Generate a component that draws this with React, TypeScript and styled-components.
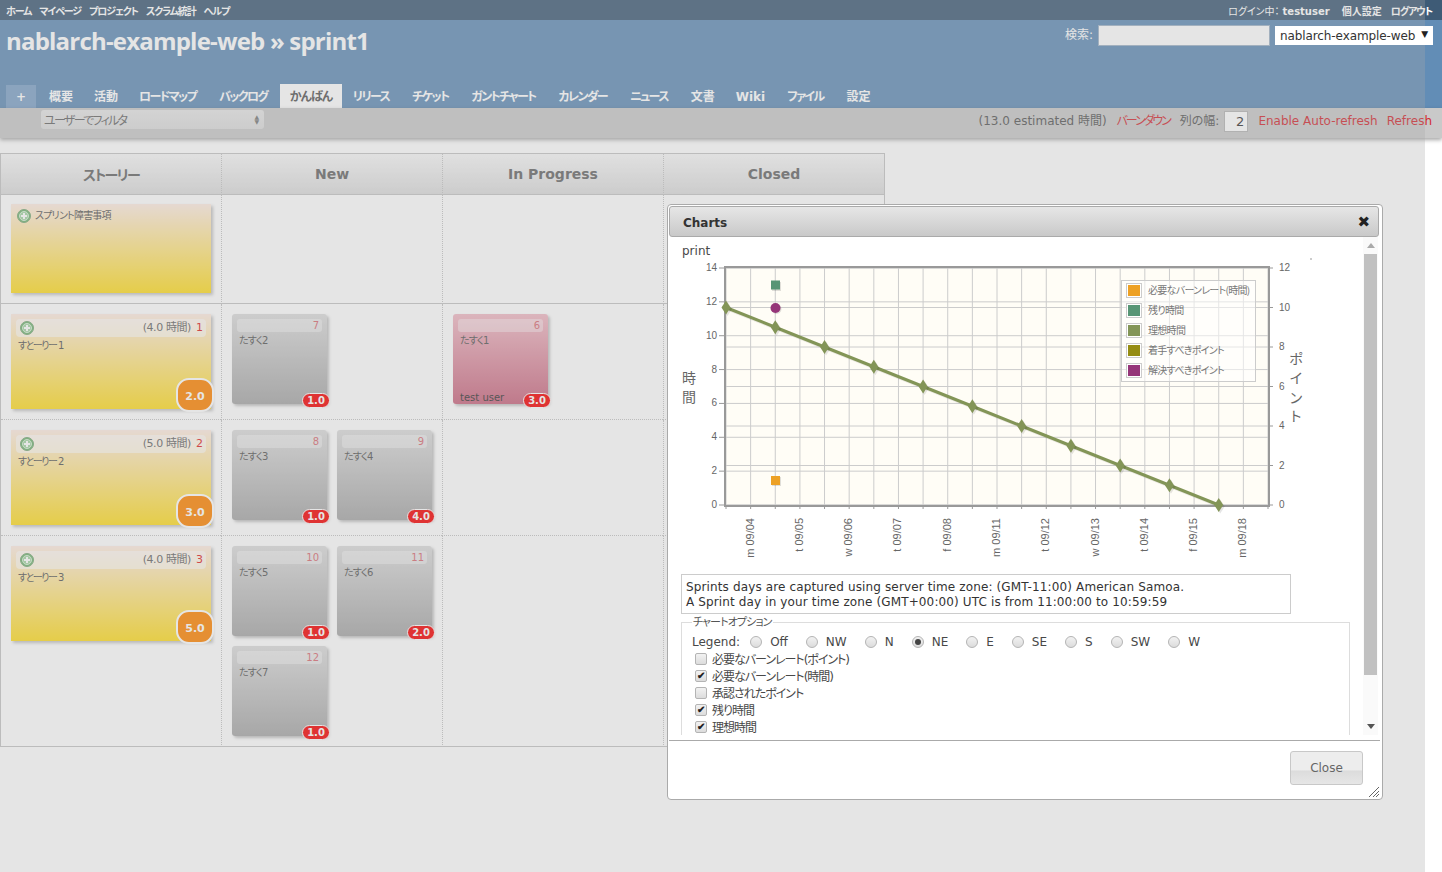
import * as React from 'react';
import styled, { createGlobalStyle } from 'styled-components';

const GlobalStyle = createGlobalStyle`
  html, body {
    margin: 0;
    padding: 0;
    height: 100%;
    overflow: hidden;
    background: #fff;
  }

  body {
    font-family: "DejaVu Sans", "Noto Sans CJK JP", sans-serif;
    font-size: 12px;
    color: #484848;
    font-feature-settings: "palt";
  }
`;

const Page = styled.div`
  width: 1442px;
  height: 872px;
  position: relative;
  overflow: hidden;
`;

const TopBar = styled.div`
  height: 20px;
  background: #3e5b76;
  display: flex;
  justify-content: space-between;
  align-items: center;
  padding: 0 10px 0 6px;
  font-size: 10px;
  font-weight: bold;
  color: #fff;
`;

const TopLinks = styled.div<{ $gap: number }>`
  display: flex;
  gap: ${(props) => props.$gap}px;
  letter-spacing: -1.1px;
`;

const LoginName = styled.span`
  font-weight: normal;
  letter-spacing: 0;
  margin-right: 3px;
`;

const UserName = styled.span`
  letter-spacing: 0;
  margin-right: 3px;
`;

const SettingsLink = styled.span`
  letter-spacing: 0;
`;

const Header = styled.div`
  height: 88px;
  background: #628db6;
  display: flex;
  flex-direction: column;
  justify-content: space-between;
`;

const HeaderTop = styled.div`
  display: flex;
  justify-content: space-between;
  padding: 5px 9px 0 6px;
`;

const Title = styled.h1`
  margin: 0;
  font-family: "Open Sans", "Noto Sans CJK JP", sans-serif;
  font-size: 24px;
  line-height: 32px;
  font-weight: 700;
  letter-spacing: -0.8px;
  color: #fff;
`;

const Search = styled.div`
  display: flex;
  align-items: flex-start;
  color: #fff;
  font-size: 12px;
`;

const SearchLabel = styled.label`
  line-height: 20px;
  margin-right: 5px;
`;

const SearchInput = styled.input`
  width: 172px;
  height: 21px;
  box-sizing: border-box;
  border: 1px solid #9fb4c8;
  background: #fff;
  margin: 0 5px 0 0;
`;

const ProjectJump = styled.div`
  width: 158px;
  height: 19px;
  margin-top: 1px;
  box-sizing: border-box;
  background: #fff;
  display: flex;
  justify-content: space-between;
  padding: 0 5px;
  color: #333;
  line-height: 20px;
  letter-spacing: -0.1px;
  position: relative;
  z-index: 101;
`;

const ProjectArrow = styled.span`
  font-size: 9px;
  line-height: 16px;
  color: #222;
`;

const Tabs = styled.ul`
  list-style: none;
  margin: 0;
  padding: 0 0 0 6px;
  display: flex;
  align-items: flex-end;
  height: 24px;
`;

const Tab = styled.li<{ $kana?: boolean }>`
  height: 24px;
  line-height: 27px;
  font-weight: bold;
  font-size: 12px;
  box-sizing: border-box;
  padding: 0 10.5px;
  color: #fff;
  ${(props) => props.$kana && 'letter-spacing: -1.6px; padding-right: 12.4px;'}
`;

const SelectedTab = styled(Tab)`
  padding: 0 10px;
  letter-spacing: -1px;
  color: #555;
  background: #fff;
`;

const PlusTab = styled(Tab)`
  height: 23px;
  width: 30px;
  line-height: 25px;
  text-align: center;
  padding: 0;
  margin-right: 2.5px;
  background: #7ea2c8;
`;

const WikiTab = styled(Tab)`
  padding-right: 11.5px;
`;

const Toolbar = styled.div`
  height: 30px;
  background: #c9c9c9;
  box-shadow: 0 2px 4px rgba(0, 0, 0, 0.35);
  display: flex;
  justify-content: space-between;
  align-items: flex-start;
  padding: 0 10px 0 41px;
  position: relative;
`;

const FilterSelect = styled.div`
  width: 223px;
  height: 19px;
  margin-top: 2px;
  box-sizing: border-box;
  border-radius: 3px;
  padding: 0 5px 1px 3px;
  background: linear-gradient(#e6e6e6, #dcdcdc);
  display: flex;
  justify-content: space-between;
  align-items: center;
  color: #666;
  font-size: 12px;
  letter-spacing: -1.7px;
`;

const FilterArrows = styled.span`
  font-size: 6px;
  line-height: 5px;
  letter-spacing: 0;
  color: #777;
  display: flex;
  flex-direction: column;
`;

const ToolbarRight = styled.div`
  display: flex;
  align-items: baseline;
  padding-top: 5px;
  line-height: 16px;
`;

const ToolText = styled.span<{ $gap?: number }>`
  color: #555;
  margin-right: ${(props) => props.$gap ?? 0}px;
  white-space: nowrap;
`;

const RedText = styled(ToolText)`
  color: #d3282f;
`;

const BurndownLink = styled(RedText)`
  letter-spacing: -2.1px;
`;

const WidthInput = styled.input`
  align-self: flex-start;
  width: 24px;
  height: 21px;
  box-sizing: border-box;
  margin: -2px 10px 0 5px;
  border: 1px solid #b5b5b5;
  background: #fff;
  padding: 0 3px;
  text-align: right;
  font-family: inherit;
  font-size: 13px;
  color: #333;
`;

const Board = styled.div`
  position: absolute;
  left: 0;
  top: 153px;
  width: 885px;
  height: 594px;
  display: grid;
  grid-template-columns: 220px repeat(3, 221px);
  grid-template-rows: 41px 109px 116px 116px 211px;
  border: 1px solid #c4c4c4;
  box-sizing: border-box;
`;

const ColumnHead = styled.div`
  display: flex;
  align-items: center;
  justify-content: center;
  font-size: 14px;
  font-weight: bold;
  color: #666;
  background: linear-gradient(#f8f8f8, #dcdcdc);
  border-bottom: 1px solid #c4c4c4;
  border-left: 1px dotted #c4c4c4;
  box-sizing: border-box;
  &:first-child {
    border-left: none;
    letter-spacing: -1.5px;
  }
`;

const Cell = styled.div<{ $first?: boolean; $solid?: boolean; $last?: boolean }>`
  box-sizing: border-box;
  border-left: ${(props) => (props.$first ? 'none' : '1px dotted #c4c4c4')};
  border-bottom: ${(props) => (props.$last ? 'none' : props.$solid ? '1px solid #c4c4c4' : '1px dotted #c4c4c4')};
  padding: 10px 0 0 10px;
  display: flex;
  flex-wrap: wrap;
  align-content: flex-start;
  gap: 10px;
`;

const StoryCard = styled.div`
  width: 200px;
  height: 95px;
  position: relative;
  box-sizing: border-box;
  padding: 5px;
  background: linear-gradient(#ffede3, #ffdd21);
  box-shadow: 2px 2px 3px rgba(0, 0, 0, 0.25);
`;

const BlockerCard = styled(StoryCard)`
  height: 89px;
  margin-top: -1px;
`;

const CardHead = styled.div`
  height: 18px;
  border-radius: 4px;
  background: rgba(255, 255, 255, 0.6);
  display: flex;
  align-items: center;
  font-size: 11px;
  line-height: 16px;
  padding: 0 3px 0 4px;
  box-sizing: border-box;
  color: #666;
`;

const BlockerHead = styled.div`
  display: flex;
  align-items: center;
  gap: 4px;
  font-size: 10px;
  letter-spacing: -0.8px;
  color: #555;
  padding-left: 1px;
  line-height: 12px;
`;

const HoursText = styled.span`
  margin-left: auto;
  letter-spacing: -0.4px;
`;

const StoryNumber = styled.span`
  margin-left: 5px;
  color: #e02020;
`;

const CardText = styled.div`
  font-size: 10px;
  line-height: 14px;
  letter-spacing: -0.8px;
  color: #555;
  padding: 2px 0 0 2px;
`;

const StoryText = styled(CardText)`
  letter-spacing: -1.5px;
`;

const PointsBadge = styled.div`
  position: absolute;
  right: -3px;
  bottom: -3px;
  width: 38px;
  height: 34px;
  box-sizing: border-box;
  padding-top: 3px;
  border: 2px solid #fff;
  border-radius: 13px;
  background: #ff8500;
  color: #fff;
  font-size: 11px;
  font-weight: bold;
  display: flex;
  align-items: center;
  justify-content: center;
`;

const TaskCard = styled.div<{ $active?: boolean }>`
  width: 95px;
  height: 90px;
  position: relative;
  box-sizing: border-box;
  padding: 5px;
  border-radius: 3px;
  background: ${(props) =>
    props.$active ? 'linear-gradient(#f1bac5, #c9667f)' : 'linear-gradient(#dcdcdc, #a7a7a7)'};
  box-shadow: 2px 2px 3px rgba(0, 0, 0, 0.25);
`;

const TaskHead = styled.div`
  height: 13px;
  border-radius: 3px;
  background: rgba(255, 255, 255, 0.4);
  text-align: right;
  font-size: 10px;
  line-height: 14px;
  padding-right: 3px;
  color: #d96a72;
`;

const TaskAssignee = styled.div`
  position: absolute;
  left: 7px;
  bottom: -1px;
  font-size: 10px;
  line-height: 14px;
  color: #333;
`;

const HoursBadge = styled.div`
  position: absolute;
  right: -3px;
  bottom: -4px;
  width: 28px;
  height: 15px;
  box-sizing: border-box;
  border: 1px solid #fff;
  border-radius: 8px;
  background: #f70000;
  color: #fff;
  font-size: 10px;
  font-weight: bold;
  line-height: 14px;
  text-align: center;
`;

const Overlay = styled.div`
  position: absolute;
  left: 0;
  top: 0;
  width: 1425px;
  height: 872px;
  background: #aaa;
  opacity: 0.3;
  z-index: 100;
`;

const Modal = styled.div`
  position: absolute;
  left: 667px;
  top: 204px;
  width: 716px;
  height: 596px;
  box-sizing: border-box;
  padding: 1px;
  background: #fff;
  border: 1px solid #aaa;
  border-radius: 4px;
  z-index: 102;
  display: flex;
  flex-direction: column;
`;

const ModalTitle = styled.div`
  margin: 0 2px 0 0;
  height: 31px;
  flex: none;
  box-sizing: border-box;
  padding: 2px 8px 0 13px;
  border: 1px solid #aaa;
  border-radius: 3px;
  background: linear-gradient(#e6e6e6, #c9c9c9);
  display: flex;
  justify-content: space-between;
  align-items: center;
  font-size: 12px;
  font-weight: bold;
  color: #333;
`;

const CloseX = styled.span`
  font-size: 15px;
  line-height: 15px;
  color: #222;
`;

const ModalBody = styled.div`
  height: 498px;
  flex: none;
  display: flex;
  margin-right: 3px;
`;

const ModalContent = styled.div`
  flex: 1;
  min-width: 0;
  overflow: hidden;
  box-sizing: border-box;
  padding: 7px 0 0 12px;
`;

const ScrollBar = styled.div`
  width: 15px;
  flex: none;
  background: #fafafa;
  display: flex;
  flex-direction: column;
  align-items: center;
`;

const ScrollArrow = styled.div<{ $down?: boolean }>`
  flex: none;
  height: 17px;
  width: 15px;
  display: flex;
  align-items: center;
  justify-content: center;

  &::before {
    content: "";
    border: solid transparent;
    border-width: ${(props) => (props.$down ? '5px 4px 0' : '0 4px 5px')};
    border-color: ${(props) =>
      props.$down ? '#555 transparent transparent' : 'transparent transparent #aaa'};
  }
`;

const ScrollTrack = styled.div`
  flex: 1;
  width: 13px;
`;

const ScrollThumb = styled.div`
  height: 421px;
  background: #c1c1c1;
`;

const PrintLink = styled.div`
  font-size: 12px;
  line-height: 14px;
  padding-left: 1px;
  color: #484848;
`;

const ChartSvg = styled.svg`
  display: block;
  width: 650px;
  height: 306px;
`;

const TickText = styled.text`
  font-family: "Liberation Sans", sans-serif;
  font-size: 10px;
  fill: #666;
`;

const DateText = styled(TickText)`
  font-size: 11px;
`;

const AxisText = styled.text`
  font-family: "Noto Sans CJK JP", sans-serif;
  font-size: 14px;
  fill: #666;
  text-anchor: middle;
`;

const LegendText = styled.text`
  font-family: "Noto Sans CJK JP", sans-serif;
  font-size: 10px;
  letter-spacing: -0.7px;
  fill: #777;
  font-feature-settings: "palt";
`;

const TimezoneNote = styled.div`
  width: 610px;
  box-sizing: border-box;
  margin-top: 10px;
  padding: 5px 4px;
  height: 40px;
  border: 1px solid #ccc;
  line-height: 15px;
  font-size: 12px;
  letter-spacing: 0.13px;
  color: #333;
  white-space: nowrap;
`;

const Options = styled.fieldset`
  margin: 2px 0 0;
  width: 669px;
  box-sizing: border-box;
  padding: 0 10px 14px;
  border: 1px solid #ddd;
  color: #484848;
`;

const OptionsLegend = styled.legend`
  padding: 0 1px;
  font-size: 11px;
  line-height: 13px;
  letter-spacing: -0.9px;
  color: #555;
`;

const LegendRow = styled.div`
  display: flex;
  align-items: center;
  gap: 18px;
  height: 17px;
  margin-top: 4px;
`;

const LegendCaption = styled.span`
  margin-right: -8px;
`;

const RadioLabel = styled.label`
  display: flex;
  align-items: center;
  gap: 8px;
`;

const Radio = styled.input`
  appearance: none;
  width: 12px;
  height: 12px;
  margin: 0;
  box-sizing: border-box;
  border: 1px solid #b4b4b4;
  border-radius: 50%;
  background: linear-gradient(#f2f2f2, #dcdcdc);
  position: relative;

  &:checked::after {
    content: "";
    position: absolute;
    left: 2px;
    top: 2px;
    width: 6px;
    height: 6px;
    border-radius: 50%;
    background: #444;
  }
`;

const CheckRow = styled.label`
  display: flex;
  align-items: center;
  gap: 5px;
  height: 17px;
  padding-left: 3px;
  letter-spacing: -1px;
`;

const Check = styled.input`
  appearance: none;
  width: 12px;
  height: 12px;
  margin: 0;
  box-sizing: border-box;
  border: 1px solid #b4b4b4;
  border-radius: 2px;
  background: linear-gradient(#f2f2f2, #dcdcdc);
  position: relative;

  &:checked::after {
    content: "✔";
    position: absolute;
    left: 1px;
    top: -2px;
    font-size: 10px;
    font-weight: bold;
    line-height: 13px;
    color: #222;
  }
`;

const ModalFooter = styled.div`
  flex: 1;
  margin: 5px 1px 0 0;
  border-top: 1px solid #aaa;
  display: flex;
  justify-content: flex-end;
  align-items: flex-start;
  padding: 10px 17px 0 0;
  position: relative;
`;

const CloseButton = styled.button`
  width: 73px;
  height: 34px;
  border: 1px solid #c8c8c8;
  border-radius: 3px;
  background: linear-gradient(#ededed 55%, #dcdcdc 60%, #e6e6e6);
  font-family: inherit;
  font-size: 12px;
  color: #666;
`;

const ResizeGrip = styled.svg`
  position: absolute;
  right: 0;
  bottom: 0;
  width: 12px;
  height: 12px;
`;

const PlusIcon = ({ size = 14 }: { size?: number }) => (
  <svg width={size} height={size} viewBox="0 0 14 14" style={{ flex: 'none' }}>
    <circle cx="7" cy="7" r="6.5" fill="#6fb56f" stroke="#7aa87a" />
    <circle cx="7" cy="7" r="4.5" fill="#a4d6a4" stroke="#d6eed6" />
    <path d="M7 4v6M4 7h6" stroke="#fff" strokeWidth="2" />
  </svg>
);

type Task = { no: number; name: string; hours: string; assignee?: string; active?: boolean };

const TaskTile = ({ task }: { task: Task }) => (
  <TaskCard $active={task.active}>
    <TaskHead>{task.no}</TaskHead>
    <CardText>{task.name}</CardText>
    {task.assignee && <TaskAssignee>{task.assignee}</TaskAssignee>}
    <HoursBadge>{task.hours}</HoursBadge>
  </TaskCard>
);

const rows: {
  story: { no: number; name: string; hours: string; points: string };
  todo: Task[];
  doing: Task[];
}[] = [
  {
    story: { no: 1, name: 'すとーりー 1', hours: '(4.0 時間)', points: '2.0' },
    todo: [{ no: 7, name: 'たすく2', hours: '1.0' }],
    doing: [{ no: 6, name: 'たすく1', hours: '3.0', assignee: 'test user', active: true }],
  },
  {
    story: { no: 2, name: 'すとーりー 2', hours: '(5.0 時間)', points: '3.0' },
    todo: [
      { no: 8, name: 'たすく3', hours: '1.0' },
      { no: 9, name: 'たすく4', hours: '4.0' },
    ],
    doing: [],
  },
  {
    story: { no: 3, name: 'すとーりー 3', hours: '(4.0 時間)', points: '5.0' },
    todo: [
      { no: 10, name: 'たすく5', hours: '1.0' },
      { no: 11, name: 'たすく6', hours: '2.0' },
      { no: 12, name: 'たすく7', hours: '1.0' },
    ],
    doing: [],
  },
];

const PLOT = { left: 726, right: 1268, top: 268, bottom: 505 };
const STEP_X = (PLOT.right - PLOT.left) / 22;
const dates = ['m 09/04', 't 09/05', 'w 09/06', 't 09/07', 'f 09/08', 'm 09/11', 't 09/12', 'w 09/13', 't 09/14', 'f 09/15', 'm 09/18'];
const legendItems = [
  ['#eda125', '必要なバーンレート(時間)'],
  ['#579575', '残り時間'],
  ['#839557', '理想時間'],
  ['#958c12', '着手すべきポイント'],
  ['#953579', '解決すべきポイント'],
];

const idealLine = Array.from({ length: 11 }, (_, i) => [
  PLOT.left + i * 2 * STEP_X,
  307.5 + i * 19.75,
]);

const BurndownChart = () => {
  const leftTicks = [14, 12, 10, 8, 6, 4, 2, 0];
  const rightTicks = [12, 10, 8, 6, 4, 2, 0];
  const leftY = (v: number) => PLOT.bottom - (v * (PLOT.bottom - PLOT.top)) / 14;
  const rightY = (v: number) => PLOT.bottom - (v * (PLOT.bottom - PLOT.top)) / 12;
  const linePoints = idealLine.map((p) => p.join(',')).join(' ');

  return (
    <ChartSvg viewBox="681 258 650 306">
      <rect x={PLOT.left} y={PLOT.top} width={PLOT.right - PLOT.left} height={PLOT.bottom - PLOT.top} fill="#fffdf6" />
      {Array.from({ length: 23 }, (_, i) => {
        const x = PLOT.left + i * STEP_X;
        return (
          <g key={i}>
            <line x1={x} x2={x} y1={PLOT.top} y2={PLOT.bottom} stroke="#ccc" />
            <line x1={x} x2={x} y1={PLOT.bottom} y2={PLOT.bottom + 4} stroke="#999" />
          </g>
        );
      })}
      {leftTicks.map((v) => (
        <g key={v}>
          <line x1={PLOT.left} x2={PLOT.right} y1={leftY(v)} y2={leftY(v)} stroke="#ccc" />
          <line x1={PLOT.left - 7} x2={PLOT.left} y1={leftY(v)} y2={leftY(v)} stroke="#999" />
          <TickText x={717} y={leftY(v) + 3} textAnchor="end">{v}</TickText>
        </g>
      ))}
      {rightTicks.map((v) => (
        <g key={v}>
          <line x1={PLOT.left} x2={PLOT.right} y1={rightY(v)} y2={rightY(v)} stroke="#ccc" />
          <line x1={PLOT.right} x2={PLOT.right + 5} y1={rightY(v)} y2={rightY(v)} stroke="#999" />
          <TickText x={1279} y={rightY(v) + 3}>{v}</TickText>
        </g>
      ))}
      <rect x={PLOT.left - 1} y={PLOT.top - 1} width={PLOT.right - PLOT.left + 2} height={PLOT.bottom - PLOT.top + 2} fill="none" stroke="#999" strokeWidth="2" />

      <polyline points={linePoints} transform="translate(1.5 1.5)" fill="none" stroke="#000" strokeOpacity="0.08" strokeWidth="3" />
      <polyline points={linePoints} fill="none" stroke="#839557" strokeWidth="3" />
      {idealLine.map(([x, y]) => (
        <g key={x}>
          <path d={`M${x + 1.5} ${y - 5.5}l4.5 7-4.5 7-4.5-7z`} fill="#000" fillOpacity="0.1" />
          <path d={`M${x} ${y - 7}l4.5 7-4.5 7-4.5-7z`} fill="#839557" />
        </g>
      ))}
      <rect x={772} y={282} width={9} height={9} fill="#000" fillOpacity="0.12" />
      <rect x={771} y={280.5} width={9} height={9} fill="#579575" />
      <circle cx={776.5} cy={309} r={5} fill="#000" fillOpacity="0.12" />
      <circle cx={775.5} cy={308} r={5} fill="#953579" />
      <rect x={772} y={477} width={9} height={9} fill="#000" fillOpacity="0.12" />
      <rect x={771} y={476} width={9} height={9} fill="#eda125" />

      {dates.map((d, i) => {
        const x = PLOT.left + (i * 2 + 1) * STEP_X + 3;
        return (
          <DateText key={i} x={x} y={518} textAnchor="end" transform={`rotate(-90 ${x} 518)`}>{d}</DateText>
        );
      })}

      <AxisText x={689} y={383}>時</AxisText>
      <AxisText x={689} y={402}>間</AxisText>
      <AxisText x={1296} y={364}>ポ</AxisText>
      <AxisText x={1296} y={383}>イ</AxisText>
      <AxisText x={1296} y={403}>ン</AxisText>
      <AxisText x={1296} y={421}>ト</AxisText>
      <rect x={1310} y={258.5} width={2} height={1} fill="#999" />

      <rect x={1121.5} y={280.5} width={134} height={101} fill="#fff" fillOpacity="0.5" stroke="#ccc" />
      {legendItems.map(([color, label], i) => (
        <g key={label}>
          <rect x={1126.5} y={283.5 + i * 20} width={15} height={14} fill="#fff" stroke="#ccc" />
          <rect x={1128} y={285 + i * 20} width={12} height={11} fill={color} />
          <LegendText x={1148} y={294 + i * 20}>{label}</LegendText>
        </g>
      ))}
    </ChartSvg>
  );
};

const legendPositions = ['Off', 'NW', 'N', 'NE', 'E', 'SE', 'S', 'SW', 'W'];
const seriesOptions: [string, boolean][] = [
  ['必要なバーンレート(ポイント)', false],
  ['必要なバーンレート(時間)', true],
  ['承認されたポイント', false],
  ['残り時間', true],
  ['理想時間', true],
];

export default function App() {
  return (
    <Page>
      <GlobalStyle />
      <TopBar>
        <TopLinks $gap={8}>
          <span>ホーム</span>
          <span>マイページ</span>
          <span>プロジェクト</span>
          <span>スクラム統計</span>
          <span>ヘルプ</span>
        </TopLinks>
        <TopLinks $gap={9}>
          <span><LoginName>ログイン中：</LoginName><UserName>testuser</UserName></span>
          <SettingsLink>個人設定</SettingsLink>
          <span>ログアウト</span>
        </TopLinks>
      </TopBar>
      <Header>
        <HeaderTop>
          <Title>nablarch-example-web » sprint1</Title>
          <Search>
            <SearchLabel>検索:</SearchLabel>
            <SearchInput />
            <ProjectJump>
              nablarch-example-web
              <ProjectArrow>▼</ProjectArrow>
            </ProjectJump>
          </Search>
        </HeaderTop>
        <Tabs>
          <PlusTab>+</PlusTab>
          <Tab>概要</Tab>
          <Tab>活動</Tab>
          <Tab $kana>ロードマップ</Tab>
          <Tab $kana>バックログ</Tab>
          <SelectedTab>かんばん</SelectedTab>
          <Tab $kana>リリース</Tab>
          <Tab $kana>チケット</Tab>
          <Tab $kana>ガントチャート</Tab>
          <Tab $kana>カレンダー</Tab>
          <Tab $kana>ニュース</Tab>
          <Tab>文書</Tab>
          <WikiTab>Wiki</WikiTab>
          <Tab $kana>ファイル</Tab>
          <Tab>設定</Tab>
        </Tabs>
      </Header>
      <Toolbar>
        <FilterSelect>
          ユーザーでフィルタ
          <FilterArrows><span>▲</span><span>▼</span></FilterArrows>
        </FilterSelect>
        <ToolbarRight>
          <ToolText $gap={10}>(13.0 estimated 時間)</ToolText>
          <BurndownLink $gap={10}>バーンダウン</BurndownLink>
          <ToolText>列の幅:</ToolText>
          <WidthInput defaultValue="2" />
          <RedText $gap={9}>Enable Auto-refresh</RedText>
          <RedText>Refresh</RedText>
        </ToolbarRight>
      </Toolbar>

      <Board>
        <ColumnHead>ストーリー</ColumnHead>
        <ColumnHead>New</ColumnHead>
        <ColumnHead>In Progress</ColumnHead>
        <ColumnHead>Closed</ColumnHead>

        <Cell $first $solid>
          <BlockerCard>
            <BlockerHead><PlusIcon />スプリント障害事項</BlockerHead>
          </BlockerCard>
        </Cell>
        <Cell $solid />
        <Cell $solid />
        <Cell $solid />

        {rows.map((row, i) => {
          const last = i === rows.length - 1;
          return (
            <React.Fragment key={row.story.no}>
              <Cell $first $last={last}>
                <StoryCard>
                  <CardHead>
                    <PlusIcon />
                    <HoursText>{row.story.hours}</HoursText>
                    <StoryNumber>{row.story.no}</StoryNumber>
                  </CardHead>
                  <StoryText>{row.story.name}</StoryText>
                  <PointsBadge>{row.story.points}</PointsBadge>
                </StoryCard>
              </Cell>
              <Cell $last={last}>
                {row.todo.map((t) => <TaskTile key={t.no} task={t} />)}
              </Cell>
              <Cell $last={last}>
                {row.doing.map((t) => <TaskTile key={t.no} task={t} />)}
              </Cell>
              <Cell $last={last} />
            </React.Fragment>
          );
        })}
      </Board>

      <Overlay />

      <Modal>
        <ModalTitle>
          Charts
          <CloseX>✖</CloseX>
        </ModalTitle>
        <ModalBody>
          <ModalContent>
            <PrintLink>print</PrintLink>
            <BurndownChart />
            <TimezoneNote>
              Sprints days are captured using server time zone: (GMT-11:00) American Samoa.<br />
              A Sprint day in your time zone (GMT+00:00) UTC is from 11:00:00 to 10:59:59
            </TimezoneNote>
            <Options>
              <OptionsLegend>チャートオプション</OptionsLegend>
              <LegendRow>
                <LegendCaption>Legend:</LegendCaption>
                {legendPositions.map((p) => (
                  <RadioLabel key={p}>
                    <Radio type="radio" name="legend" defaultChecked={p === 'NE'} />
                    {p}
                  </RadioLabel>
                ))}
              </LegendRow>
              {seriesOptions.map(([label, on]) => (
                <CheckRow key={label}>
                  <Check type="checkbox" defaultChecked={on} />
                  {label}
                </CheckRow>
              ))}
            </Options>
          </ModalContent>
          <ScrollBar>
            <ScrollArrow />
            <ScrollTrack><ScrollThumb /></ScrollTrack>
            <ScrollArrow $down />
          </ScrollBar>
        </ModalBody>
        <ModalFooter>
          <CloseButton>Close</CloseButton>
          <ResizeGrip viewBox="0 0 12 12">
            <path d="M11 1L1 11M11 5L5 11M11 8L8 11" stroke="#666" />
          </ResizeGrip>
        </ModalFooter>
      </Modal>
    </Page>
  );
}
